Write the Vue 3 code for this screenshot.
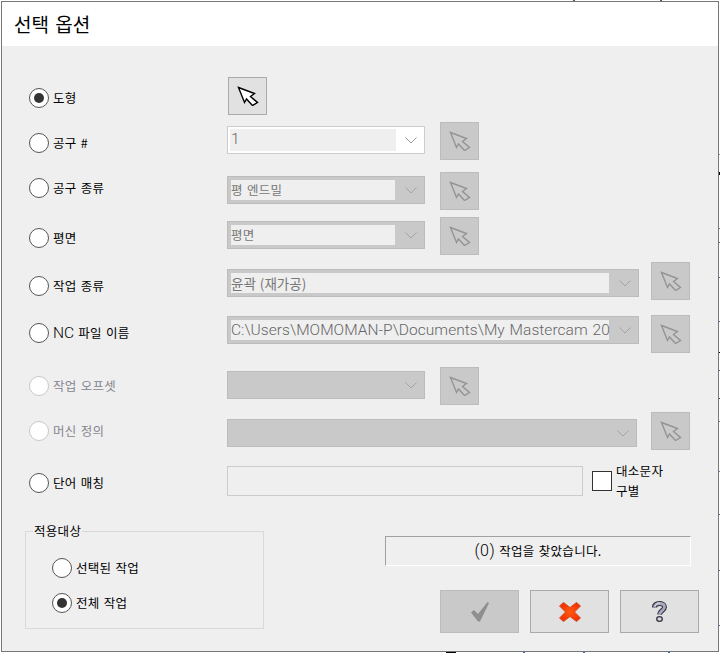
<script setup>
const rows = [
  { id: 1, label: '도형', checked: true, top: 0, radio: 11, pick: 'first' },
  { id: 2, label: '공구 #', top: 7, radio: 11, combo: 4, text: '1', kind: 'white', w: 198, thin: true },
  { id: 3, label: '공구 종류', top: 12, radio: 6, combo: 4, text: '평 엔드밀', kind: 'grey', w: 198 },
  { id: 4, label: '평면', top: 7, radio: 11, combo: 4, text: '평면', kind: 'grey', w: 198 },
  { id: 5, label: '작업 종류', top: 7, radio: 14, combo: 7, text: '윤곽 (재가공)', kind: 'grey', w: 412, mid: true },
  { id: 6, label: 'NC 파일 이름', top: 15, radio: 8, combo: 1, text: 'C:\\Users\\MOMOMAN-P\\Documents\\My Mastercam 20', kind: 'grey', w: 412, thin: true },
  { id: 7, label: '작업 오프셋', top: 14, radio: 9, combo: 4, kind: 'off', w: 198, disabled: true },
  { id: 8, label: '머신 정의', top: 7, radio: 9, combo: 7, kind: 'off', w: 410, disabled: true },
]

// Scraps of the drawing behind the dialog that show around its frame.
const marks = [
  [719, 154, 1, 1, '#999'], [719, 172, 1, 3, '#000'], [719, 228, 1, 1, '#7a6fa8'], [719, 242, 1, 1, '#7a5a90'],
  [719, 277, 1, 1, '#3a66c0'], [719, 321, 1, 1, '#3a66c0'], [719, 352, 1, 1, '#000'], [719, 370, 1, 1, '#3a66c0'],
  [719, 398, 1, 1, '#444'], [719, 421, 1, 1, '#5a7ac0'], [719, 471, 1, 1, '#5a7ac0'], [719, 514, 1, 1, '#3a66c0'],
  [719, 570, 1, 1, '#3a66c0'], [719, 625, 1, 1, '#3a66c0'], [573, 0, 2, 1, '#555'], [660, 0, 2, 1, '#555'],
  [446, 652, 10, 1, '#000'], [523, 652, 2, 1, '#3a66c0'], [583, 652, 2, 1, '#3a66c0'], [668, 652, 2, 1, '#3a66c0'],
]
</script>

<template>
  <div class="window">
    <header class="title">선택 옵션</header>
    <main class="body">
      <div
        v-for="r in rows"
        :key="r.id"
        class="row"
        :style="{ marginTop: r.top + 'px' }"
      >
        <label class="opt" :class="{ off: r.disabled }" :style="{ marginTop: r.radio + 'px' }">
          <span class="radio" :class="{ on: r.checked }"></span>
          <span class="lbl">
            <template v-if="r.id === 6"><span class="latin">NC</span> 파일 이름</template>
            <template v-else>{{ r.label }}</template>
          </span>
        </label>
        <div
          v-if="r.kind"
          class="combo"
          :class="[r.kind, 'w' + r.w]"
          :style="{ width: r.w + 'px', marginTop: r.combo + 'px' }"
        >
          <div v-if="r.text" class="field" :class="{ thin: r.thin, mid: r.mid }">{{ r.text }}</div>
          <svg class="chev" width="12" height="7" viewBox="0 0 12 7"><path d="M.5.5 6 6l5.500-5.500" fill="none" stroke="currentColor" /></svg>
        </div>
        <button class="pick" :class="r.pick ? 'live' : 'dead'">
          <svg width="22" height="20" viewBox="0 0 22 20">
            <path d="M1.500 1.500 17.500 7.500 13.500 10.500 20.500 16.500 15.500 19.500 9.500 13 7.500 16.500Z" />
          </svg>
        </button>
      </div>

      <div class="row word">
        <label class="opt" style="margin-top: 7px">
          <span class="radio"></span>
          <span class="lbl">단어 매칭</span>
        </label>
        <div class="input"></div>
        <span class="check"></span>
        <span class="case">대소문자<br />구별</span>
      </div>

      <div class="bottom">
        <section class="group">
          <span class="legend">적용대상</span>
          <label class="opt small">
            <span class="radio"></span>
            <span class="lbl">선택된 작업</span>
          </label>
          <label class="opt small">
            <span class="radio on"></span>
            <span class="lbl">전체 작업</span>
          </label>
        </section>
        <div class="side">
          <div class="status"><span class="paren">(0)</span> 작업을 찾았습니다.</div>
          <div class="actions">
            <button class="act dis">
              <svg width="20" height="22" viewBox="0 0 20 22"><path d="M1 11.500 4 9 8 13 17.500 1 19 2 10 20.500H8Z" fill="#8f8f8f" /></svg>
            </button>
            <button class="act">
              <svg width="22" height="20" viewBox="0 0 22 20">
                <defs>
                  <radialGradient id="xfill" cx="50%" cy="50%" r="60%">
                    <stop offset="0" stop-color="#ff5a10" />
                    <stop offset="1" stop-color="#f02c00" />
                  </radialGradient>
                </defs>
                <path d="M.5 4 4.500.5 11 5.500 17.500.5 21.500 4 15.500 10 21.500 16 17.500 19.500 11 14.500 4.500 19.500.5 16 6.500 10Z" fill="url(#xfill)" stroke="#d84a20" stroke-linejoin="round" />
              </svg>
            </button>
            <button class="act">
              <svg width="18" height="21" viewBox="0 0 18 21">
                <path d="M3.500 6.500C3.500 3.500 6 2.500 8.500 2.500S13.500 3.500 13.500 6C13.500 9.500 9 9.500 8.500 13.500" fill="none" stroke="#34343f" stroke-width="5" />
                <path d="M3.500 6.500C3.500 3.500 6 2.500 8.500 2.500S13.500 3.500 13.500 6C13.500 9.500 9 9.500 8.500 13.500" fill="none" stroke="#a8a8c0" stroke-width="2.800" />
                <path d="M4 5C5 3 7 2 9 2" fill="none" stroke="#e8e8f2" stroke-width="1" />
                <ellipse cx="8.500" cy="18" rx="2.800" ry="2.300" fill="#d8d8e4" stroke="#34343f" stroke-width="1.300" />
              </svg>
            </button>
          </div>
        </div>
      </div>
    </main>
    <i v-for="(m, i) in marks" :key="i" class="mark" :style="{ left: m[0] + 'px', top: m[1] + 'px', width: m[2] + 'px', height: m[3] + 'px', background: m[4] }"></i>
  </div>
</template>

<style scoped>
.window {
  box-sizing: border-box;
  width: 718px;
  height: 651px;
  margin: 1px 0 0 1px;
  border: 1px solid #777;
  background: #efefef;
  font-family: "Noto Sans CJK KR", "Noto Sans", sans-serif;
  font-size: 12.500px;
  letter-spacing: 0.300px;
  word-spacing: 1px;
  color: #000;
}
.mark {
  position: absolute;
}
.title {
  height: 44px;
  padding-left: 12px;
  background: #fff;
  font-size: 19px;
  line-height: 44px;
  letter-spacing: 0;
  word-spacing: 2px;
}
.body {
  padding: 31px 0 0 27px;
}
.row {
  display: flex;
  align-items: flex-start;
  height: 38px;
}
.opt {
  display: flex;
  align-items: center;
  gap: 4px;
  width: 198px;
  height: 20px;
  flex: none;
}
.opt.off .lbl {
  color: #85858f;
}
.opt.off .radio {
  border-color: #c8c8c8;
}
.radio {
  box-sizing: border-box;
  display: flex;
  align-items: center;
  justify-content: center;
  width: 20px;
  height: 20px;
  flex: none;
  border: 1.500px solid #555;
  border-radius: 50%;
  background: #fff;
}
.radio.on::after {
  content: "";
  width: 10px;
  height: 10px;
  border-radius: 50%;
  background: #333;
}
.lbl {
  line-height: 20px;
  white-space: nowrap;
}
.latin {
  font-family: "Roboto", sans-serif;
  font-size: 15.500px;
  font-weight: 300;
  letter-spacing: 0;
}
.paren {
  font-family: "Roboto", sans-serif;
  font-size: 16px;
  font-weight: 300;
  letter-spacing: 0.500px;
}
.combo {
  box-sizing: border-box;
  position: relative;
  display: flex;
  height: 28px;
  flex: none;
  border: 1px solid #bcbcbc;
  background: #c9c9c9;
  color: #a3a3a3;
}
.combo.white {
  border: 1px solid #ccc;
  background: #fff;
  padding: 2px;
  color: #999;
}
.field {
  box-sizing: border-box;
  width: calc(100% - 32px);
  height: 20px;
  margin: 3px 0 0 3px;
  background: #efefef;
  color: #777;
  line-height: 20px;
  white-space: nowrap;
}
.white .field {
  width: calc(100% - 26px);
  height: 22px;
  margin: 0;
  padding-left: 1px;
  line-height: 22px;
}
.field.mid {
  font-size: 13.500px;
  letter-spacing: 0;
}
.field.thin {
  font-family: "Roboto", sans-serif;
  font-size: 15.500px;
  font-weight: 300;
  letter-spacing: 0.050px;
  line-height: 21px;
  color: #666;
}
.chev {
  position: absolute;
  right: 7px;
  top: 10px;
}
.pick {
  box-sizing: border-box;
  display: flex;
  align-items: flex-start;
  justify-content: flex-start;
  width: 39px;
  height: 38px;
  flex: none;
  margin: 0 0 0 15px;
  padding: 8px 0 0 8px;
  border: 1px solid #bcbcbc;
  background: #c9c9c9;
}
.pick path {
  fill: #c9c9c9;
  stroke: #949494;
  stroke-width: 1.400;
}
.pick.live {
  margin-left: 1px;
  border-color: #aaa;
  background: #e1e1e1;
}
.pick.live path {
  fill: #fff;
  stroke: #000;
}
.w410 + .pick {
  margin-left: 14px;
}
.w412 + .pick {
  margin-left: 12px;
}
.word {
  height: 30px;
  margin-top: 16px;
}
.input {
  box-sizing: border-box;
  width: 356px;
  height: 30px;
  border: 1px solid #ccc;
  background: #efefef;
}
.check {
  box-sizing: border-box;
  width: 20px;
  height: 20px;
  margin: 5px 4px 0 9px;
  border: 1.500px solid #333;
  background: #fff;
}
.case {
  margin-top: -5px;
  line-height: 20px;
  white-space: nowrap;
}
.bottom {
  display: flex;
  align-items: flex-start;
  margin: 35px 0 0 -4px;
}
.group {
  box-sizing: border-box;
  position: relative;
  width: 239px;
  height: 98px;
  padding: 26px 0 0 26px;
  border: 1px solid #d9d9d9;
}
.legend {
  position: absolute;
  left: 7px;
  top: -10px;
  padding: 0 1px;
  background: #efefef;
  line-height: 18px;
}
.opt.small + .opt.small {
  margin-top: 15px;
}
.side {
  margin: 5px 0 0 121px;
}
.status {
  box-sizing: border-box;
  width: 306px;
  height: 30px;
  border: 1px solid;
  border-color: #a0a0a0 #fff #fff #a0a0a0;
  line-height: 28px;
  text-align: center;
}
.actions {
  display: flex;
  gap: 11px;
  margin: 24px 0 0 55px;
}
.act {
  box-sizing: border-box;
  display: flex;
  align-items: center;
  justify-content: center;
  width: 79px;
  height: 43px;
  padding: 0;
  border: 1px solid #aaa;
  background: #e1e1e1;
}
.act.dis {
  border-color: #bcbcbc;
  background: #c9c9c9;
}
</style>

<style>
html,
body {
  background: #fff;
}
</style>
